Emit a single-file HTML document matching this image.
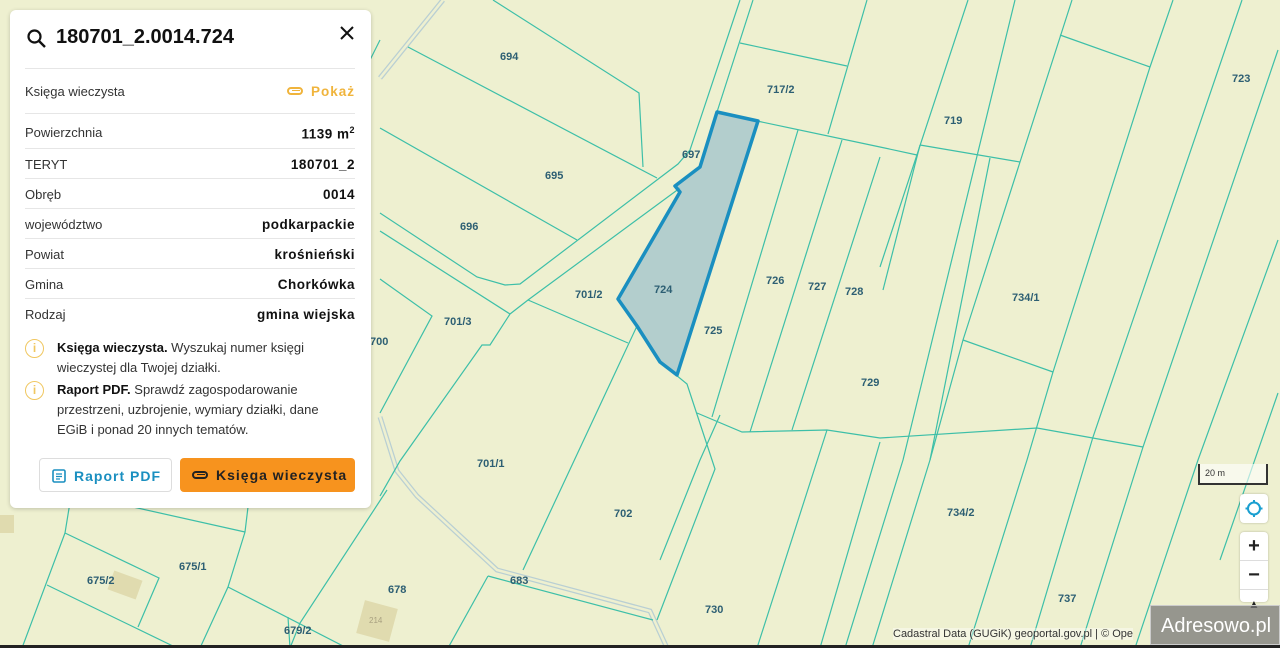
<!DOCTYPE html>
<html><head><meta charset="utf-8">
<style>
*{margin:0;padding:0;box-sizing:border-box}
body{width:1280px;height:648px;overflow:hidden;position:relative;background:#eef0d0;font-family:"Liberation Sans",sans-serif}
svg.map{position:absolute;left:0;top:0}
.lbl{font:bold 11px "Liberation Sans",sans-serif;fill:#2d5f73}
.panel{position:absolute;left:10px;top:10px;width:361px;height:498px;background:#fff;border-radius:6px;box-shadow:0 1px 4px rgba(0,0,0,.2)}
.title{position:absolute;left:46px;top:16px;font-size:20px;font-weight:bold;color:#111}
.row{position:absolute;left:15px;width:330px;height:30px;border-top:1px solid #e6e6e6;font-size:13px;color:#333}
.row span{position:absolute;left:0;top:8px}
.row b{position:absolute;right:0;top:8px;font-size:13.5px;color:#111;letter-spacing:.5px}
.info{position:absolute;left:47px;width:290px;font-size:13px;line-height:20px;color:#333}
.info b{color:#111}
.ic{position:absolute;left:15px;width:19px;height:19px;border:1.5px solid #f0c760;border-radius:50%;color:#f0c760;font-size:12px;text-align:center;line-height:16px;font-weight:bold}
.btn{position:absolute;top:448px;height:34px;border-radius:4px;font-size:14px;font-weight:bold;letter-spacing:1px;line-height:34px}
.ctrl{position:absolute;left:1240px;width:28px;background:#fff;border-radius:4px;box-shadow:0 0 2px rgba(0,0,0,.25)}
.clip{display:inline-block;position:relative;width:16px;height:8px;border:2px solid currentColor;border-radius:5px;margin-right:8px;vertical-align:1px}
.clip:after{content:"";position:absolute;left:3px;top:1px;width:8px;height:2px;border-top:1.5px solid currentColor}
</style></head><body>
<svg class="map" width="1280" height="648" viewBox="0 0 1280 648">
<g fill="#ddd6a8" opacity=".8">
<rect x="110" y="575" width="30" height="20" transform="rotate(20 125 585)"/>
<rect x="360" y="604" width="34" height="34" transform="rotate(15 377 621)"/>
<rect x="0" y="515" width="14" height="18"/>
</g>
<g fill="none" stroke="#b9cfd3" stroke-width="5">
<polyline points="380,417 397,471 417,496 497,570 650,611 667,648"/>
<polyline points="443,0 380,78"/>
</g>
<g fill="none" stroke="#eef0d0" stroke-width="2.5">
<polyline points="380,417 397,471 417,496 497,570 650,611 667,648"/>
<polyline points="443,0 380,78"/>
</g>
<g fill="none" stroke="#3dbfa8" stroke-width="1.2">
<polyline points="408,47 657,178"/>
<polyline points="380,128 577,240"/>
<polyline points="493,0 639,93 643,167"/>
<polyline points="380,213 477,277 505,285 520,284 678,164 690,150 740,0"/>
<polyline points="380,231 510,314"/>
<polyline points="380,279 432,316 380,413"/>
<polyline points="510,314 528,300 680,188"/>
<polyline points="510,314 490,345 482,345 400,461 380,496"/>
<polyline points="528,300 628,343"/>
<polyline points="637,326 523,570"/>
<polyline points="676,375 687,384 715,469 657,620"/>
<polyline points="697,413 742,432 827,430 880,438 1037,428 1143,447"/>
<polyline points="798,130 712,417"/>
<polyline points="842,140 750,432"/>
<polyline points="880,157 792,430"/>
<polyline points="740,43 847,66"/>
<polyline points="757,121 880,147 917,155"/>
<polyline points="753,0 717,112"/>
<polyline points="867,0 828,134"/>
<polyline points="827,430 757,648"/>
<polyline points="880,442 820,648"/>
<polyline points="488,576 653,620"/>
<polyline points="488,576 448,648"/>
<polyline points="968,0 880,267"/>
<polyline points="1015,0 903,460 845,648"/>
<polyline points="1072,0 1020,162 963,340 930,460 872,648"/>
<polyline points="1173,0 1150,67 1053,372 1027,460 968,648"/>
<polyline points="1242,0 1093,437 1030,648"/>
<polyline points="1278,50 1143,447 1080,648"/>
<polyline points="1278,240 1198,460 1135,648"/>
<polyline points="1278,393 1220,560"/>
<polyline points="1060,35 1150,67"/>
<polyline points="920,145 1020,162"/>
<polyline points="920,145 883,290"/>
<polyline points="990,158 930,460"/>
<polyline points="963,340 1053,372"/>
<polyline points="720,415 700,460 660,560"/>
<polyline points="72,490 65,533 22,648"/>
<polyline points="133,507 245,532"/>
<polyline points="248,507 245,532 228,587 200,648"/>
<polyline points="65,533 159,578 138,627"/>
<polyline points="47,585 177,648"/>
<polyline points="228,587 347,648"/>
<polyline points="288,617 290,648"/>
<polyline points="387,490 300,623 290,648"/>
<polyline points="370,60 380,40"/>
</g>
<polygon points="717,112 758,121 677,375 660,362 637,326 618,299 680,192 675,186 696,170 700,167" fill="#9fc3cc" fill-opacity=".75" stroke="#1a8fc0" stroke-width="3.5" stroke-linejoin="round"/>
<g class="lbl">
<text x="500" y="60">694</text><text x="545" y="179">695</text><text x="460" y="230">696</text>
<text x="682" y="158">697</text><text x="767" y="93">717/2</text><text x="944" y="124">719</text>
<text x="1232" y="82">723</text><text x="654" y="293">724</text><text x="575" y="298">701/2</text>
<text x="704" y="334">725</text><text x="766" y="284">726</text><text x="808" y="290">727</text>
<text x="845" y="295">728</text><text x="861" y="386">729</text><text x="1012" y="301">734/1</text>
<text x="444" y="325">701/3</text><text x="370" y="345">700</text><text x="477" y="467">701/1</text>
<text x="614" y="517">702</text><text x="510" y="584">683</text><text x="388" y="593">678</text>
<text x="705" y="613">730</text><text x="947" y="516">734/2</text><text x="1058" y="602">737</text>
<text x="179" y="570">675/1</text><text x="87" y="584">675/2</text><text x="284" y="634">679/2</text>
</g>
<text x="369" y="623" font-size="8" fill="#a8a080" font-family="Liberation Sans">214</text>
<rect x="0" y="645" width="1280" height="3" fill="#222"/>
</svg>

<div style="position:absolute;left:1198px;top:464px;width:70px;height:21px;background:rgba(255,255,255,.6);border-left:2px solid #333;border-right:2px solid #333;border-bottom:2px solid #333;font-size:9px;color:#333;padding:4px 0 0 5px">20 m</div>
<div class="ctrl" style="top:494px;height:29px"><svg width="28" height="29"><circle cx="14" cy="14.5" r="6" fill="none" stroke="#1a9fd0" stroke-width="2"/><path d="M14 6v3M14 20v3M5.5 14.5h3M19.5 14.5h3" stroke="#1a9fd0" stroke-width="2"/></svg></div>
<div class="ctrl" style="top:532px;height:70px;font-size:20px;font-weight:bold;text-align:center;color:#222;line-height:28px">+<div style="border-top:1px solid #ddd">−</div><div style="border-top:1px solid #ddd;font-size:12px">▲</div></div>
<div style="position:absolute;left:893px;top:628px;font-size:11px;color:#333;background:rgba(255,255,255,.4)">Cadastral Data (GUGiK) geoportal.gov.pl | © Ope</div>
<div style="position:absolute;left:1150px;top:605px;width:130px;height:40px;background:rgba(120,120,120,.75);border:1px solid #ccc;color:#fff;font-size:20px;line-height:40px;padding-left:10px">Adresowo.pl</div>

<div class="panel">
<svg style="position:absolute;left:16px;top:18px" width="22" height="22"><circle cx="8.5" cy="8.5" r="6" fill="none" stroke="#111" stroke-width="2.2"/><path d="M13 13l6 6" stroke="#111" stroke-width="2.4"/></svg>
<div class="title">180701_2.0014.724</div>
<svg style="position:absolute;left:330px;top:16px" width="14" height="14"><path d="M1 1l12 12M13 1L1 13" stroke="#111" stroke-width="2"/></svg>
<div class="row" style="top:58px;height:45px"><span style="top:15px">Księga wieczysta</span><b style="top:15px;color:#f0b43c;font-weight:bold;letter-spacing:1px"><span class="clip" style="position:relative;left:auto;top:auto"></span>Pokaż</b></div>
<div class="row" style="top:103px;height:35px"><span style="top:11px">Powierzchnia</span><b style="top:11px">1139 m<sup style="font-size:9px">2</sup></b></div>
<div class="row" style="top:138px"><span>TERYT</span><b>180701_2</b></div>
<div class="row" style="top:168px"><span>Obręb</span><b>0014</b></div>
<div class="row" style="top:198px"><span>województwo</span><b>podkarpackie</b></div>
<div class="row" style="top:228px"><span>Powiat</span><b>krośnieński</b></div>
<div class="row" style="top:258px"><span>Gmina</span><b>Chorkówka</b></div>
<div class="row" style="top:288px"><span>Rodzaj</span><b>gmina wiejska</b></div>
<div class="ic" style="top:329px">i</div>
<div class="info" style="top:328px"><b>Księga wieczysta.</b> Wyszukaj numer księgi wieczystej dla Twojej działki.</div>
<div class="ic" style="top:371px">i</div>
<div class="info" style="top:370px"><b>Raport PDF.</b> Sprawdź zagospodarowanie przestrzeni, uzbrojenie, wymiary działki, dane EGiB i ponad 20 innych tematów.</div>
<div class="btn" style="left:29px;width:133px;border:1px solid #ddd;color:#1a8fc0;padding-left:12px"><svg width="14" height="14" style="vertical-align:-2px;margin-right:8px"><rect x="1" y="1" width="12" height="12" rx="1.5" fill="none" stroke="#1a8fc0" stroke-width="1.6"/><path d="M4 5h6M4 7.5h6M4 10h4" stroke="#1a8fc0" stroke-width="1.3"/></svg>Raport PDF</div>
<div class="btn" style="left:170px;width:175px;background:#f7931e;color:#222;padding-left:12px"><span class="clip"></span>Księga wieczysta</div>
</div>
</body></html>
